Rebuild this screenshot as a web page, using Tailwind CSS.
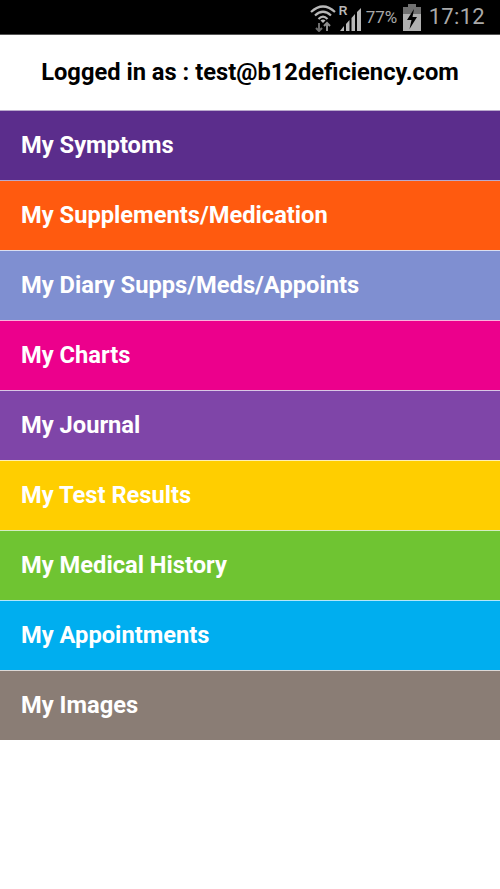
<!DOCTYPE html>
<html lang="en">
<head>
    <meta charset="UTF-8">
    <meta name="viewport" content="width=device-width, initial-scale=1.0">
    <title>B12 Deficiency</title>
    <script src="https://cdn.jsdelivr.net/npm/@tailwindcss/browser@4"></script>
</head>
<body class="bg-white w-[500px] h-[889px] overflow-hidden font-['Roboto',sans-serif]">
    <!-- Status bar -->
    <div class="h-[35px] bg-black border-b border-[#555] flex items-center justify-end pr-[15px] text-[#a6a6a6]">
        <svg class="w-[26px] h-[30px] mr-[2px]" viewBox="0 0 26 30" fill="none" stroke="#b8b8b8" stroke-width="2.200">
            <path d="M1 10 Q13 -1 25 10"/>
            <path d="M5 13.500 Q13 6 21 13.500"/>
            <path d="M8.500 17 Q13 12.500 17.500 17"/>
            <path d="M13 21 L10.500 18.500 Q13 16.500 15.500 18.500 Z" fill="#b8b8b8" stroke="none"/>
            <path d="M9 21 V29 M6 26 L9 29 L12 26" stroke="#6e6e6e" stroke-width="2"/>
            <path d="M17 29 V21 M14 24 L17 21 L20 24" stroke="#8e8e8e" stroke-width="2"/>
        </svg>
        <div class="relative w-[26px] h-[30px]">
            <span class="absolute left-[1px] top-[3px] text-[12px] leading-none font-bold text-[#b8b8b8] font-['Liberation_Sans',sans-serif]">R</span>
            <svg class="w-[26px] h-[30px]" viewBox="0 0 26 30" fill="#b8b8b8">
                <path d="M2 29 H6 V24 L2 29 Z"/>
                <path d="M8 29 H11.500 V18 L8 22 Z"/>
                <path d="M13.500 29 H17 V12 L13.500 16 Z"/>
                <path d="M19 29 H23 V6 L19 10 Z"/>
            </svg>
        </div>
        <span class="text-[17px] leading-none w-[35px] ml-[2px] text-[#a8a8a8]">77%</span>
        <svg class="w-[18px] h-[28px] ml-[2px] mr-[8px]" viewBox="0 0 18 28">
            <rect x="5" y="1" width="8" height="3" fill="#707070"/>
            <rect x="0" y="4" width="18" height="7" fill="#707070"/>
            <rect x="0" y="11" width="18" height="17" fill="#b0b0b0"/>
            <path d="M11 6 L4 17 H8.500 L6.500 26 L14 14 H9.500 L11 6 Z" fill="#000"/>
        </svg>
        <span class="text-[22px] leading-none text-[#aaa] tracking-[0.3px]">17:12</span>
    </div>

    <!-- Logged in header -->
    <div class="h-[75px] flex items-center justify-center bg-white pt-[1px]">
        <span class="text-[23.7px] font-bold text-black">Logged in as : test@b12deficiency.com</span>
    </div>

    <!-- Menu -->
    <div class="flex flex-col">
        <a class="h-[70px] border-t border-[#b9a9cc] pl-[21px] flex items-center bg-[#5b2d8c] text-white text-[23.7px] font-bold">My Symptoms</a>
        <a class="h-[70px] border-t border-[#b9a9cc] pl-[21px] flex items-center bg-[#ff5a0f] text-white text-[23.7px] font-bold">My Supplements/Medication</a>
        <a class="h-[70px] border-t border-white/70 pl-[21px] flex items-center bg-[#7f8fd1] text-white text-[23.7px] font-bold">My Diary Supps/Meds/Appoints</a>
        <a class="h-[70px] border-t border-white/70 pl-[21px] flex items-center bg-[#ec008c] text-white text-[23.7px] font-bold">My Charts</a>
        <a class="h-[70px] border-t border-white/70 pl-[21px] flex items-center bg-[#7f45a8] text-white text-[23.7px] font-bold">My Journal</a>
        <a class="h-[70px] border-t border-white/70 pl-[21px] flex items-center bg-[#ffce00] text-white text-[23.7px] font-bold">My Test Results</a>
        <a class="h-[70px] border-t border-white/70 pl-[21px] flex items-center bg-[#6fc432] text-white text-[23.7px] font-bold">My Medical History</a>
        <a class="h-[70px] border-t border-white/70 pl-[21px] flex items-center bg-[#00aeef] text-white text-[23.7px] font-bold">My Appointments</a>
        <a class="h-[70px] border-t border-white/70 pl-[21px] flex items-center bg-[#8a7d75] text-white text-[23.7px] font-bold">My Images</a>
    </div>
</body>
</html>
